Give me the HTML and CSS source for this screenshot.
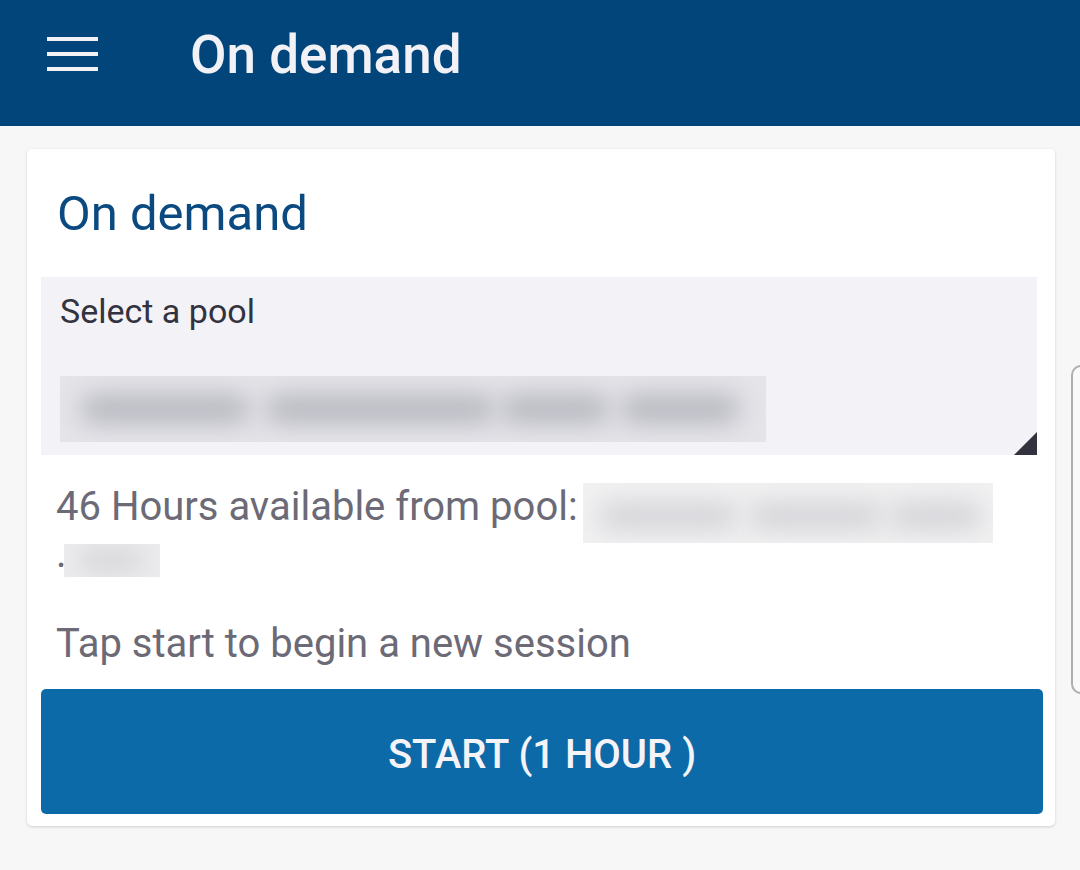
FILE: index.html
```html
<!DOCTYPE html>
<html lang="en">
<head>
    <meta charset="UTF-8">
    <meta name="viewport" content="width=device-width, initial-scale=1.0">
    <title>On demand</title>
    <link rel="stylesheet" href="styles.css">
</head>
<body>

    <header class="topbar">
        <div class="menu-btn">
            <span></span>
            <span></span>
            <span></span>
        </div>
        <h1 class="topbar-title">On demand</h1>
    </header>

    <div class="card">
        <h2 class="card-title">On demand</h2>

        <div class="pool-field">
            <div class="pool-label">Select a pool</div>
            <div class="blur blur-pool">
                <i class="blob" style="left: 20px; width: 170px;"></i>
                <i class="blob" style="left: 205px; width: 230px;"></i>
                <i class="blob" style="left: 440px; width: 110px;"></i>
                <i class="blob" style="left: 560px; width: 120px;"></i>
            </div>
            <div class="corner"></div>
        </div>

        <p class="info">46 Hours available from pool:<span class="blur blur-inline1"><i class="blob soft" style="left: 15px; width: 140px;"></i><i class="blob soft" style="left: 165px; width: 135px;"></i><i class="blob soft" style="left: 305px; width: 95px;"></i></span><br>.<span class="blur blur-inline2"><i class="blob soft" style="left: 15px; width: 65px;"></i></span></p>

        <p class="info tap">Tap start to begin a new session</p>

        <button class="start-btn">START (1 HOUR )</button>
    </div>

    <div class="side-handle"></div>

</body>
</html>
```

FILE: styles.css
```css
body {
    margin: 0;
    font-family: Roboto, "Noto Sans", sans-serif;
    background-color: #f7f7f7;
    height: 870px;
    overflow: hidden;
    position: relative;
}

.topbar {
    height: 126px;
    box-sizing: border-box;
    background-color: #02457b;
    display: flex;
    align-items: center;
    padding: 0 0 16px 47px;
}

.menu-btn {
    width: 51px;
    display: flex;
    flex-direction: column;
    gap: 11px;
    margin-right: 92px;
    margin-top: -2px;
}

.menu-btn span {
    display: block;
    height: 4px;
    background-color: #f1f1f6;
}

.topbar-title {
    margin: 0;
    color: #f1f1f6;
    font-size: 53px;
    font-weight: 500;
    line-height: 61px;
}

.card {
    margin: 23px 25px 0 27px;
    background-color: #fff;
    border-radius: 5px;
    box-shadow: 0 1px 3px rgba(0, 0, 0, 0.16);
    padding: 37px 12px 12px 14px;
    display: flex;
    flex-direction: column;
}

.card-title {
    margin: 0 0 35px 16px;
    color: #0a4a80;
    font-size: 49px;
    font-weight: 400;
    line-height: 56px;
}

.pool-field {
    position: relative;
    margin-right: 6px;
    background-color: #f2f2f7;
    padding: 14px 19px 13px 19px;
}

.pool-label {
    color: #33323f;
    font-size: 34px;
    line-height: 40px;
    margin-bottom: 45px;
}

.corner {
    position: absolute;
    right: 0;
    bottom: 0;
    width: 0;
    height: 0;
    border-left: 23px solid transparent;
    border-bottom: 23px solid #33333f;
}

.blur {
    position: relative;
    overflow: hidden;
    display: block;
}

.blur-pool {
    width: 706px;
    height: 66px;
    background-color: #e4e4e9;
}

.blob {
    position: absolute;
    top: 18px;
    height: 30px;
    border-radius: 15px;
    background-color: #b9b9c1;
    filter: blur(12px);
}

.blob.soft {
    background-color: #d6d6da;
}

.info {
    margin: 28px 0 0 15px;
    color: #6b6a76;
    font-size: 40px;
    line-height: 47px;
}

.blur-inline1 {
    display: inline-block;
    vertical-align: baseline;
    width: 410px;
    height: 60px;
    margin: 0 0 -23px 5px;
    background-color: #f1f1f2;
}

.blur-inline2 {
    display: inline-block;
    vertical-align: baseline;
    width: 96px;
    height: 33px;
    margin: 0 0 -10px -3px;
    background-color: #ececee;
}

.blur-inline2 .blob {
    top: 4px;
    height: 24px;
}

.info.tap {
    margin-top: 43px;
    margin-bottom: 22px;
}

.start-btn {
    height: 125px;
    border: none;
    border-radius: 5px;
    background-color: #0d6aa8;
    color: #f4f4f8;
    font-family: Roboto, "Noto Sans", sans-serif;
    font-size: 40px;
    font-weight: 500;
    padding: 6px 0 0;
    cursor: pointer;
}

.side-handle {
    position: absolute;
    left: 1071px;
    top: 365px;
    width: 30px;
    height: 325px;
    border: 2px solid #aeaeae;
    border-radius: 10px;
    background-color: #f9f9f9;
}
```
